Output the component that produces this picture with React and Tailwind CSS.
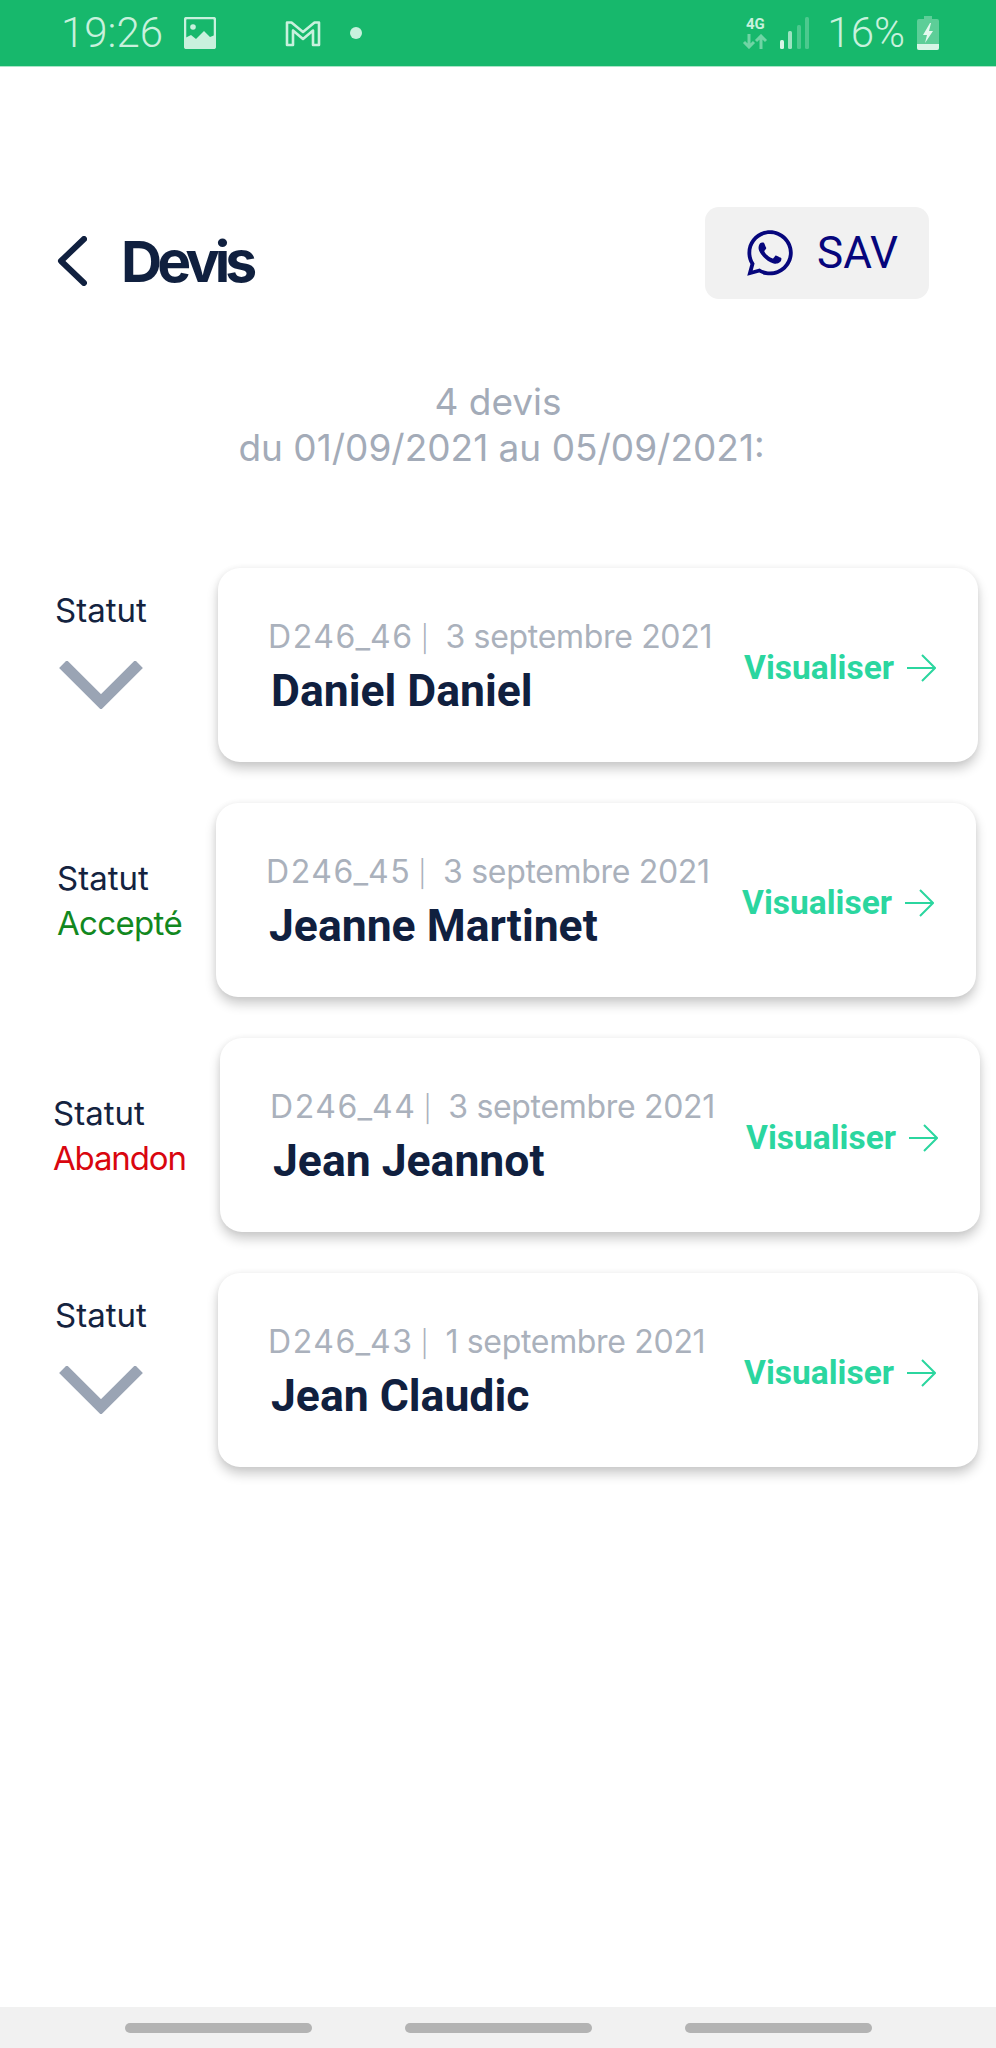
import React from 'react';
import { FaWhatsapp } from 'react-icons/fa';

const inter = "font-['Inter',sans-serif]";

const devis = [
  { id: 'D246_46', date: '3 septembre 2021', name: 'Daniel Daniel', col: 'w-[218px] pl-[55px]', status: null },
  { id: 'D246_45', date: '3 septembre 2021', name: 'Jeanne Martinet', col: 'w-[216px] pl-[57px]', status: 'Accepté', color: 'text-[#12881f] tracking-[-0.02em]' },
  { id: 'D246_44', date: '3 septembre 2021', name: 'Jean Jeannot', col: 'w-[220px] pl-[53px]', status: 'Abandon', color: 'text-[#d9060f] tracking-[-0.035em]' },
  { id: 'D246_43', date: '1 septembre 2021', name: 'Jean Claudic', col: 'w-[218px] pl-[55px]', status: null },
];

function StatusBar() {
  return (
    <div className="h-[67px] shrink-0 bg-[#17b86c] border-b border-[#a9e6c8] flex items-center text-[#c8f1dd] font-['Roboto',sans-serif]">
      <span className="ml-[61px] text-[42px] leading-none font-light">19:26</span>
      <svg className="ml-[21px]" width="32" height="32" viewBox="0 0 32 32">
        <rect x="1" y="1" width="30" height="30" rx="2" fill="#17b86c" stroke="#c8f1dd" strokeWidth="2.5" />
        <circle cx="9" cy="10" r="2.8" fill="#c8f1dd" />
        <path d="M1 31V21l6-3 5 4 8-8 6 6 5-2v13z" fill="#c8f1dd" />
      </svg>
      <svg className="ml-[68px]" width="38" height="28" viewBox="0 0 38 28" fill="none" stroke="#c8f1dd" strokeWidth="2.6" strokeLinejoin="round">
        <path d="M3 26V3.5h4.5L19 13 30.5 3.5H35V26h-6V11.5L19 20 9 11.5V26z" />
      </svg>
      <span className="ml-[28px] w-3 h-3 rounded-full bg-[#c8f1dd]" />
      <div className="ml-auto flex flex-col items-center w-[26px] mr-[12px]">
        <span className="text-[15px] leading-[14px] font-bold">4G</span>
        <svg className="mt-[3px] opacity-50" width="26" height="15" viewBox="0 0 26 15" fill="none" stroke="#c8f1dd" strokeWidth="3">
          <path d="M7 0v13M2 8l5 5 5-5M19 15V2M14 7l5-5 5 5" />
        </svg>
      </div>
      <svg width="29" height="32" viewBox="0 0 29 32">
        <rect x="0" y="23" width="4" height="9" rx="1.5" fill="#d7f5e6" />
        <rect x="8" y="14" width="4" height="18" rx="1.5" fill="#c8f1dd" opacity="0.75" />
        <rect x="17" y="8" width="4" height="24" rx="1.5" fill="#c8f1dd" opacity="0.3" />
        <rect x="25" y="0" width="4" height="32" rx="1.5" fill="#c8f1dd" opacity="0.3" />
      </svg>
      <span className="ml-[18px] text-[42px] leading-none font-light">16%</span>
      <svg className="ml-[12px] mr-[57px]" width="22" height="34" viewBox="0 0 22 34">
        <path d="M7 0h8v3h5a2 2 0 0 1 2 2v27a2 2 0 0 1-2 2H2a2 2 0 0 1-2-2V5a2 2 0 0 1 2-2h5z" fill="#c8f1dd" opacity="0.4" />
        <path d="M0 28h22v4a2 2 0 0 1-2 2H2a2 2 0 0 1-2-2z" fill="#d7f5e6" />
        <path d="M13 7 6 19h4l-2 8 8-12h-4l2-8z" fill="#e4f9ef" />
      </svg>
    </div>
  );
}

function Chevron() {
  return (
    <svg className="mt-[34px]" width="84" height="48" viewBox="0 0 84 48" fill="none">
      <path d="M4 3 42 41 80 3" stroke="#9aa4b4" strokeWidth="11" strokeLinejoin="miter" />
    </svg>
  );
}

function Row({ item }) {
  return (
    <div className="flex items-center">
      <div className={`${item.col} shrink-0`}>
        <div className={`${inter} inline-flex flex-col text-[33px] leading-[34px] text-[#14233f] ${item.status ? 'items-start' : 'items-center -translate-y-[14px]'}`}>
          <span>Statut</span>
          {item.status ? (
            <span className={`${item.color} mt-[11px]`}>{item.status}</span>
          ) : (
            <Chevron />
          )}
        </div>
      </div>
      <div className="w-[760px] h-[194px] shrink-0 bg-white rounded-[22px] shadow-[0_0_6px_rgba(0,0,0,0.06),0_7px_12px_rgba(0,0,0,0.2)] flex items-center justify-between pl-[50px] pr-[42px]">
        <div className="mt-[4px]">
          <div className={`${inter} text-[32px] leading-[38px] tracking-[-0.01em] text-[#aab1bc] whitespace-nowrap`}>
            <span className="tracking-[0.05em]">{item.id}</span>
            <span className="ml-[7px] text-[26px] font-light">|</span>
            <span className="ml-[17px]">{item.date}</span>
          </div>
          <div className="font-['Roboto',sans-serif] font-bold text-[44.5px] leading-[50px] text-[#10203f] mt-[8px] ml-[3px]">
            {item.name}
          </div>
        </div>
        <div className="mt-[6px] flex items-center gap-[13px]">
          <span className="font-['Roboto',sans-serif] font-bold text-[33.5px] leading-none text-[#2bd69f]">Visualiser</span>
          <svg width="29" height="28" viewBox="0 0 29 28" fill="none" stroke="#2bd69f" strokeWidth="2">
            <path d="M0 14h27M15 1l13 13-13 13" />
          </svg>
        </div>
      </div>
    </div>
  );
}

export default function App() {
  return (
    <div className="w-[996px] h-[2048px] bg-white flex flex-col overflow-hidden">
      <StatusBar />

      <header className="mt-[140px] h-[92px] flex items-center justify-between pl-[57px] pr-[67px]">
        <div className="mt-[16px] flex items-center">
          <svg width="30" height="50" viewBox="0 0 30 50" fill="none">
            <path d="M27 3 4 25l23 22" stroke="#10203f" strokeWidth="6" strokeLinecap="round" strokeLinejoin="round" />
          </svg>
          <h1 className={`${inter} ml-[34px] text-[57px] leading-none font-bold tracking-[-0.085em] text-[#10203f]`}>Devis</h1>
        </div>
        <button className="w-[224px] h-[92px] pl-[8px] rounded-[14px] bg-[#f1f1f1] flex items-center justify-center gap-[21px] text-[#06067c]">
          <FaWhatsapp className="w-[52px] h-[52px]" />
          <span className="font-['Roboto',sans-serif] text-[44px] leading-none">SAV</span>
        </button>
      </header>

      <div className={`${inter} mt-[80px] text-center text-[37px] leading-[46px] text-[#a3abb8]`}>
        <div>4 devis</div>
        <div className="pl-[7px]">du 01/09/2021 au 05/09/2021:</div>
      </div>

      <div className="mt-[97px] flex flex-col gap-[41px]">
        {devis.map((item) => (
          <Row key={item.id} item={item} />
        ))}
      </div>

      <nav className="mt-auto h-[41px] bg-[#f1f1f1] flex items-center pl-[125px] gap-[93px]">
        <span className="w-[187px] h-[10px] rounded-full bg-[#b3b3b3]" />
        <span className="w-[187px] h-[10px] rounded-full bg-[#b3b3b3]" />
        <span className="w-[187px] h-[10px] rounded-full bg-[#b3b3b3]" />
      </nav>
    </div>
  );
}
